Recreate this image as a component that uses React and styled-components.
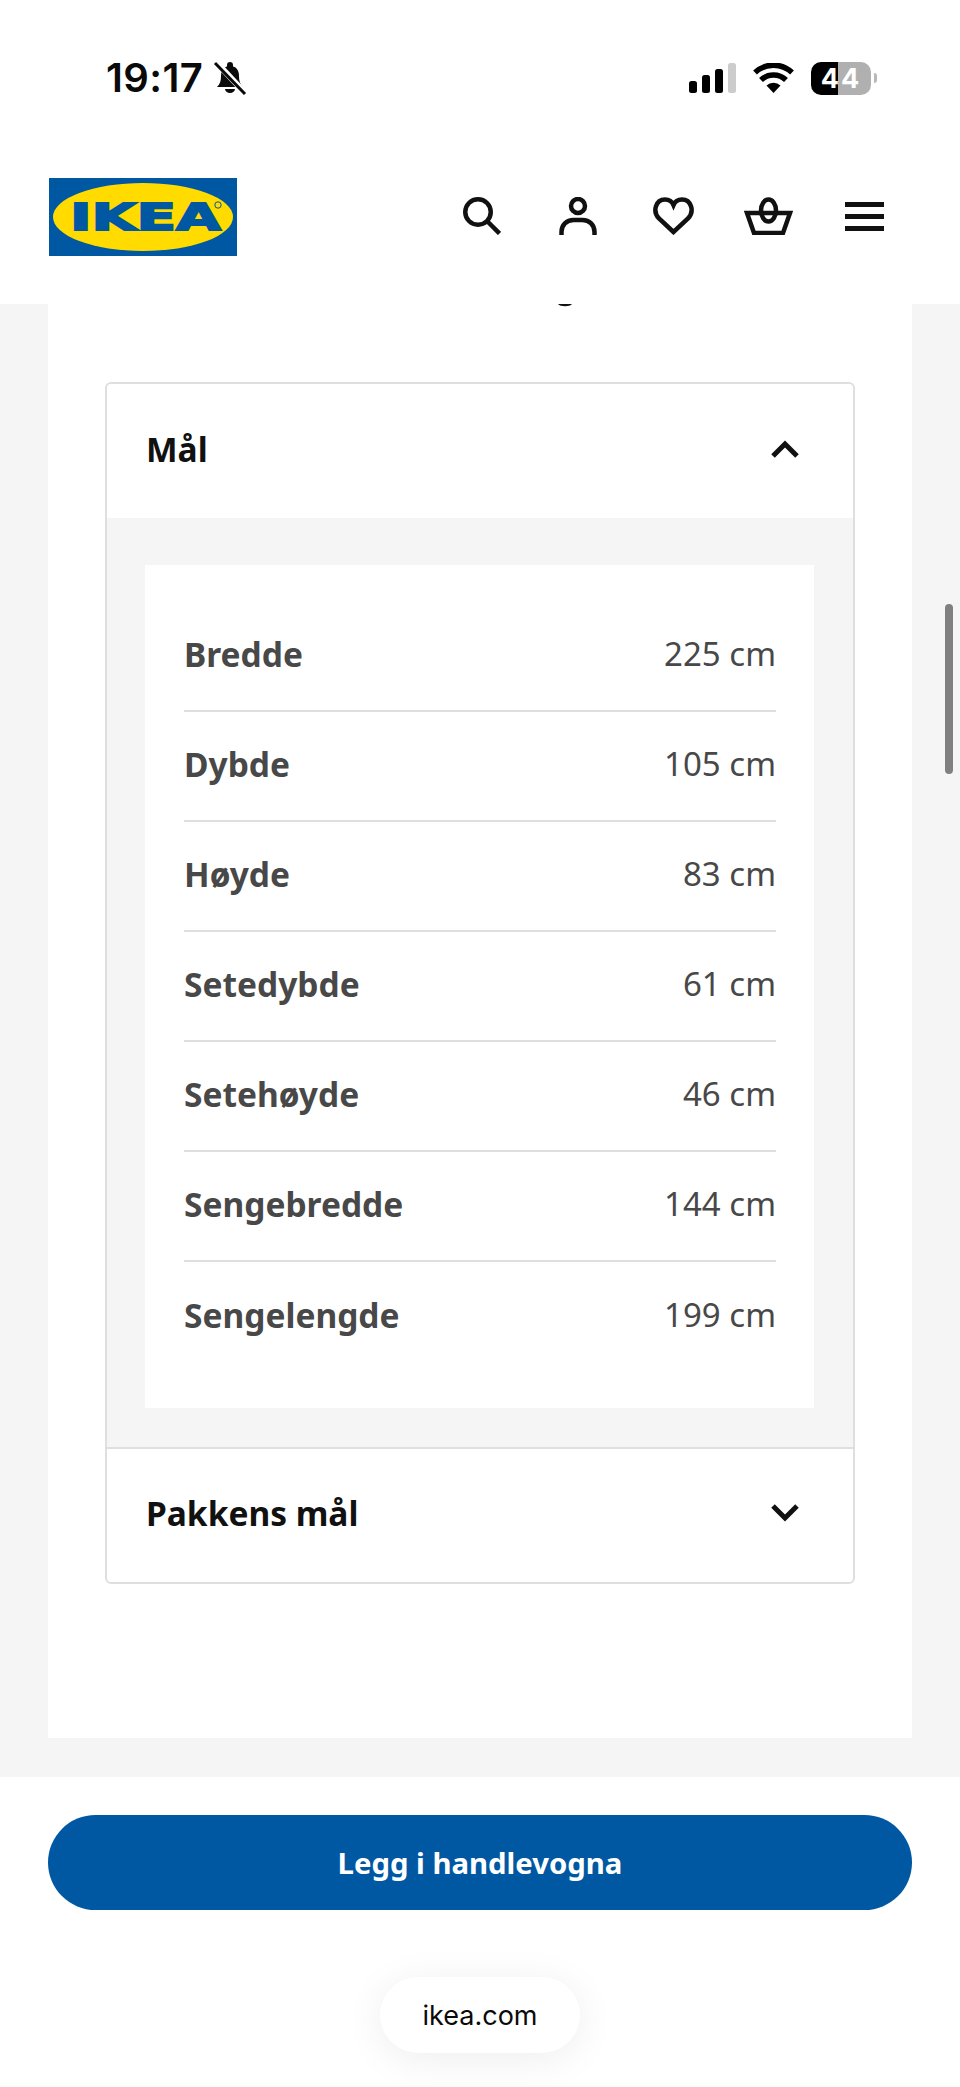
import React from "react";
import styled, { createGlobalStyle } from "styled-components";

const GlobalStyle = createGlobalStyle`
  html, body {
    margin: 0;
    padding: 0;
    background: #fff;
    font-family: "Noto Sans", "Open Sans", sans-serif;
  }
`;

const Page = styled.div`
  position: relative;
  width: 960px;
  height: 2087px;
  overflow: hidden;
  display: flex;
  flex-direction: column;
  background: #fff;
`;

const StatusBar = styled.div`
  height: 114px;
  padding: 60px 89px 0 106px;
  box-sizing: border-box;
  display: flex;
  justify-content: space-between;
  align-items: flex-start;
`;

const StatusGroup = styled.div`
  display: flex;
  align-items: center;
  gap: ${(p) => p.$gap}px;
  height: 36px;
`;

const Time = styled.span`
  font-family: Inter, Roboto, sans-serif;
  font-size: 40px;
  font-weight: 600;
  letter-spacing: 0.4px;
  line-height: 36px;
  color: #0a0a0a;
`;

const Battery = styled.div`
  position: relative;
  width: 60px;
  height: 33px;
  border-radius: 10px;
  background: linear-gradient(90deg, #000 0 27px, #b0b0b0 27px 100%);
  color: #fff;
  font-family: Inter, Roboto, sans-serif;
  font-size: 27px;
  font-weight: 700;
  line-height: 33px;
  text-align: center;
  letter-spacing: 2px;
  &::after {
    content: "";
    position: absolute;
    top: 11px;
    right: -6px;
    width: 3px;
    height: 10px;
    border-radius: 0 4px 4px 0;
    background: #b8b8b8;
  }
`;

const Header = styled.header`
  height: 190px;
  padding: 64px 76px 0 49px;
  box-sizing: border-box;
  display: flex;
  justify-content: space-between;
  align-items: flex-start;
`;

const Nav = styled.nav`
  display: grid;
  grid-template-columns: 96px 94px 91px 101px 39px;
  align-items: center;
  height: 78px;
  margin-top: -1px;
`;

const Main = styled.main`
  height: 1473px;
  background: #f5f5f5;
  padding: 0 48px;
  box-sizing: border-box;
`;

const Panel = styled.section`
  position: relative;
  height: 1434px;
  background: #fff;
  padding: 78px 57px 0;
  box-sizing: border-box;
`;

const Clipped = styled.svg`
  position: absolute;
  top: 0;
  left: 510px;
`;

const Accordion = styled.div`
  border: 2px solid #dfdfdf;
  border-radius: 6px;
  overflow: hidden;
  background: #fff;
`;

const AccordionHead = styled.div`
  height: ${(p) => p.$height}px;
  padding: 0 54px 5px 39px;
  box-sizing: border-box;
  display: flex;
  justify-content: space-between;
  align-items: center;
  font-size: 33.5px;
  font-weight: 700;
  color: #111;
  border-top: ${(p) => (p.$divided ? "2px solid #dfdfdf" : "none")};
`;

const AccordionBody = styled.div`
  background: #f5f5f5;
  padding: 47px 39px 39px 38px;
`;

const Sheet = styled.div`
  background: #fff;
  padding: 37px 38px 36px 39px;
`;

const Row = styled.div`
  height: 110px;
  padding-bottom: 5px;
  box-sizing: border-box;
  display: flex;
  justify-content: space-between;
  align-items: center;
  font-size: 33.5px;
  color: #484848;
  border-bottom: ${(p) => (p.$last ? "none" : "2px solid #dfdfdf")};
`;

const RowLabel = styled.span`
  font-weight: 700;
`;

const RowValue = styled.span`
  font-size: 33px;
  font-weight: 400;
`;

const Footer = styled.footer`
  padding: 38px 48px 0;
  display: flex;
  flex-direction: column;
  align-items: center;
`;

const BuyButton = styled.button`
  width: 100%;
  height: 95px;
  border: none;
  border-radius: 48px;
  background: #0058a3;
  color: #fff;
  font-family: inherit;
  font-size: 29.3px;
  font-weight: 700;
`;

const UrlPill = styled.div`
  margin-top: 67px;
  width: 200px;
  height: 76px;
  border-radius: 38px;
  background: #fff;
  box-shadow: 0 6px 40px rgba(0, 0, 0, 0.07);
  display: flex;
  align-items: center;
  justify-content: center;
  font-family: Inter, Roboto, sans-serif;
  font-size: 27px;
  color: #0a0a0a;
`;

const ScrollThumb = styled.div`
  position: absolute;
  top: 604px;
  left: 945px;
  width: 8px;
  height: 170px;
  border-radius: 4px;
  background: #808080;
`;

const BellOff = () => (
  <svg width="34" height="34" viewBox="0 0 34 34">
    <path d="M17 5c-6 0-9 4-9 10 0 5-1 8-4 11h26c-3-3-4-6-4-11 0-6-3-10-9-10z" fill="#0a0a0a" />
    <path d="M14 4a3 3 0 0 1 6 0v2h-6z" fill="#0a0a0a" />
    <path d="M12 28h10a5 4 0 0 1-10 0z" fill="#0a0a0a" />
    <path d="M3 1l29 31" stroke="#fff" strokeWidth="6" />
    <path d="M2 2l30 31" stroke="#0a0a0a" strokeWidth="3" />
  </svg>
);

const Signal = () => (
  <svg width="47" height="30" viewBox="0 0 47 30">
    <rect x="0" y="18" width="8" height="12" rx="2.5" fill="#000" />
    <rect x="13" y="12" width="8" height="18" rx="2.5" fill="#000" />
    <rect x="26" y="6" width="8" height="24" rx="2.5" fill="#000" />
    <rect x="39" y="0" width="8" height="30" rx="2.5" fill="#ccc" />
  </svg>
);

const Wifi = () => (
  <svg width="41" height="30" viewBox="0 0 41 30">
    <path d="M20.5 30l-7-7.5a10 10 0 0 1 14 0z" fill="#000" />
    <path d="M8 17a18 18 0 0 1 25 0" stroke="#000" strokeWidth="5.5" fill="none" />
    <path d="M2 9.5a27 27 0 0 1 37 0" stroke="#000" strokeWidth="5.5" fill="none" />
  </svg>
);

const Logo = () => (
  <svg width="188" height="78" viewBox="0 0 188 78">
    <rect width="188" height="78" fill="#0058a3" />
    <ellipse cx="94" cy="39" rx="90" ry="34" fill="#ffdb00" />
    <text
      x="21"
      y="52"
      textLength="151"
      lengthAdjust="spacingAndGlyphs"
      fontFamily="'DejaVu Sans', sans-serif"
      fontWeight="700"
      fontSize="37"
      fill="#0058a3"
      stroke="#0058a3"
      strokeWidth="1.8"
    >
      IKEA
    </text>
    <circle cx="169" cy="27" r="3.2" fill="none" stroke="#0058a3" strokeWidth="1" />
  </svg>
);

const SearchIcon = () => (
  <svg width="38" height="38" viewBox="0 0 38 38" fill="none" stroke="#111" strokeWidth="4.5">
    <circle cx="15" cy="15" r="12.75" />
    <path d="M24.5 24.5L36.5 36.5" />
  </svg>
);

const PersonIcon = () => (
  <svg width="38" height="38" viewBox="0 0 38 38" fill="none" stroke="#111" strokeWidth="4.5">
    <circle cx="19" cy="9" r="7" />
    <path d="M2.5 38v-3c0-7 5-12 12-12h9c7 0 12 5 12 12v3" />
  </svg>
);

const HeartIcon = () => (
  <svg width="41" height="38" viewBox="0 0 41 38" fill="none" stroke="#111" strokeWidth="4.5">
    <path d="M20.5 35L6 21.5C-1 14 3 2.5 12 2.5c4 0 7 2 8.5 5.5C22 4.5 25 2.5 29 2.5c9 0 13 11.5 6 19z" />
  </svg>
);

const BasketIcon = () => (
  <svg width="49" height="38" viewBox="0 0 49 38" fill="none" stroke="#111" strokeWidth="4.5">
    <path d="M3 16h43l-7 20H10z" />
    <ellipse cx="24.5" cy="13.5" rx="7.5" ry="11" />
  </svg>
);

const MenuIcon = () => (
  <svg width="39" height="29" viewBox="0 0 39 29" fill="#111">
    <rect y="0" width="39" height="5" />
    <rect y="12" width="39" height="5" />
    <rect y="24" width="39" height="5" />
  </svg>
);

const Chevron = ({ up }) => (
  <svg width="28" height="18" viewBox="0 0 28 18" fill="none" stroke="#111" strokeWidth="5">
    <path d={up ? "M2 16L14 4l12 12" : "M2 2l12 12L26 2"} />
  </svg>
);

const measures = [
  ["Bredde", "225 cm"],
  ["Dybde", "105 cm"],
  ["Høyde", "83 cm"],
  ["Setedybde", "61 cm"],
  ["Setehøyde", "46 cm"],
  ["Sengebredde", "144 cm"],
  ["Sengelengde", "199 cm"],
];

export default function App() {
  return (
    <Page>
      <GlobalStyle />
      <StatusBar>
        <StatusGroup $gap={10}>
          <Time>19:17</Time>
          <BellOff />
        </StatusGroup>
        <StatusGroup $gap={17}>
          <Signal />
          <Wifi />
          <Battery>44</Battery>
        </StatusGroup>
      </StatusBar>
      <Header>
        <Logo />
        <Nav>
          <SearchIcon />
          <PersonIcon />
          <HeartIcon />
          <BasketIcon />
          <MenuIcon />
        </Nav>
      </Header>
      <Main>
        <Panel>
          <Clipped width="14" height="3" viewBox="0 0 14 3">
            <path d="M0 0h14c-2 3-12 3-14 0z" fill="#111" />
          </Clipped>
          <Accordion>
            <AccordionHead $height={134}>
              Mål
              <Chevron up />
            </AccordionHead>
            <AccordionBody>
              <Sheet>
                {measures.map(([label, value], i) => (
                  <Row key={label} $last={i === measures.length - 1}>
                    <RowLabel>{label}</RowLabel>
                    <RowValue>{value}</RowValue>
                  </Row>
                ))}
              </Sheet>
            </AccordionBody>
            <AccordionHead $height={135} $divided>
              Pakkens mål
              <Chevron />
            </AccordionHead>
          </Accordion>
        </Panel>
      </Main>
      <Footer>
        <BuyButton>Legg i handlevogna</BuyButton>
        <UrlPill>ikea.com</UrlPill>
      </Footer>
      <ScrollThumb />
    </Page>
  );
}
